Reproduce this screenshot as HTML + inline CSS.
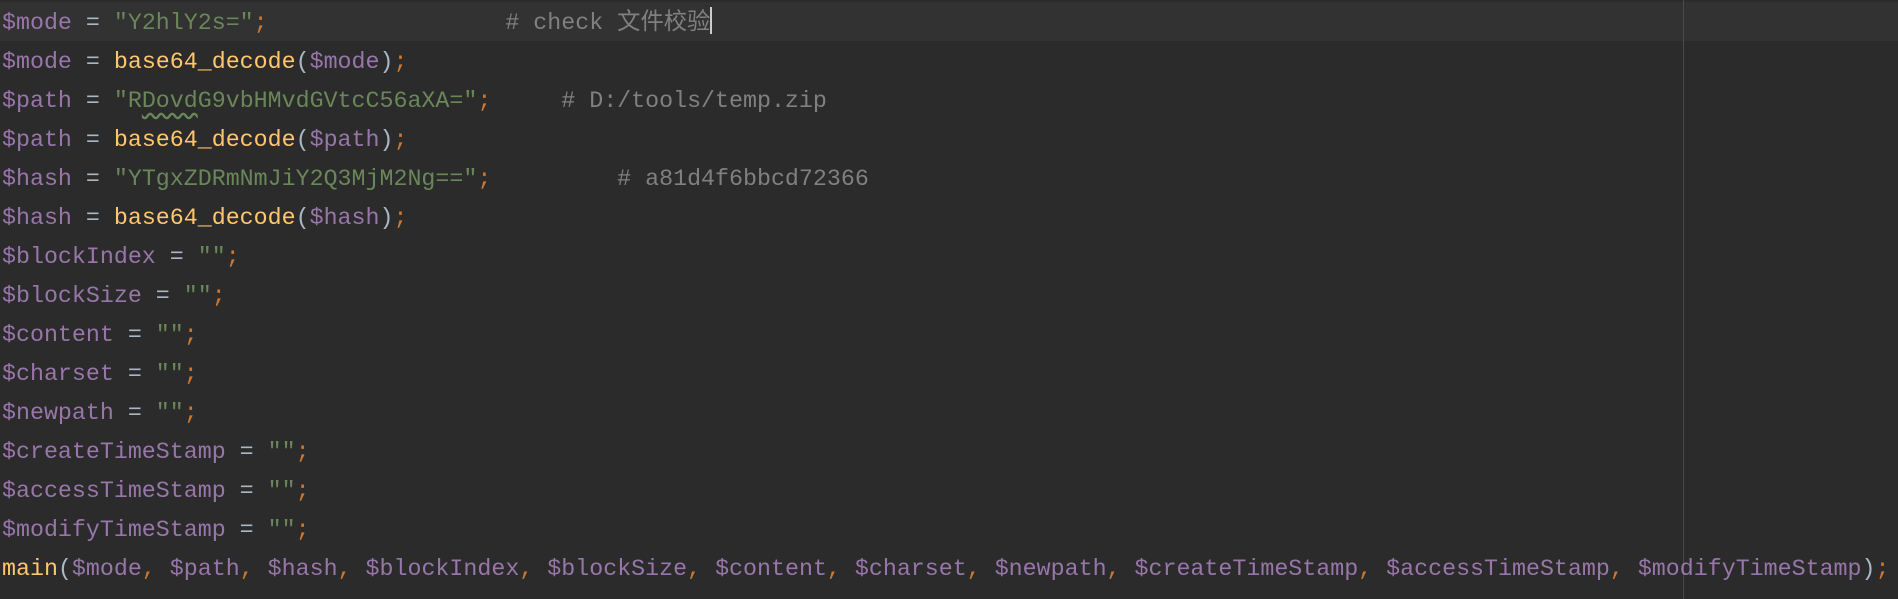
<!DOCTYPE html>
<html><head><meta charset="utf-8"><style>
html,body{margin:0;padding:0;background:#2b2b2b;width:1898px;height:599px;overflow:hidden}
.c{position:absolute;left:2px;top:4px;font-family:"Liberation Mono","Noto Sans CJK SC",monospace;font-size:23.3px;line-height:39px;color:#a9b7c6;white-space:pre}
.v{color:#9876aa}.s{color:#6a8759}.f{color:#ffc66d}.k{color:#cc7832}.m{color:#808080}
.hl{position:absolute;left:0;top:2px;width:1898px;height:39px;background:#323232}
.g{position:absolute;left:1683px;top:0;width:1px;height:599px;background:#4a4a4a}
.cur{display:inline-block;width:2px;height:27px;background:#ccc;vertical-align:-5px}
.w{text-decoration:underline wavy #6a8759;text-underline-offset:5px}
</style></head><body>
<div class="hl"></div><div class="g"></div>
<div class="c"><span class="v">$mode</span> = <span class="s">"Y2hlY2s="</span><span class="k">;</span>                 <span class="m"># check 文件校验</span><span class="cur"></span>
<span class="v">$mode</span> = <span class="f">base64_decode</span>(<span class="v">$mode</span>)<span class="k">;</span>
<span class="v">$path</span> = <span class="s">"R<span class="w">Dovd</span>G9vbHMvdGVtcC56aXA="</span><span class="k">;</span>     <span class="m"># D:/tools/temp.zip</span>
<span class="v">$path</span> = <span class="f">base64_decode</span>(<span class="v">$path</span>)<span class="k">;</span>
<span class="v">$hash</span> = <span class="s">"YTgxZDRmNmJiY2Q3MjM2Ng=="</span><span class="k">;</span>         <span class="m"># a81d4f6bbcd72366</span>
<span class="v">$hash</span> = <span class="f">base64_decode</span>(<span class="v">$hash</span>)<span class="k">;</span>
<span class="v">$blockIndex</span> = <span class="s">""</span><span class="k">;</span>
<span class="v">$blockSize</span> = <span class="s">""</span><span class="k">;</span>
<span class="v">$content</span> = <span class="s">""</span><span class="k">;</span>
<span class="v">$charset</span> = <span class="s">""</span><span class="k">;</span>
<span class="v">$newpath</span> = <span class="s">""</span><span class="k">;</span>
<span class="v">$createTimeStamp</span> = <span class="s">""</span><span class="k">;</span>
<span class="v">$accessTimeStamp</span> = <span class="s">""</span><span class="k">;</span>
<span class="v">$modifyTimeStamp</span> = <span class="s">""</span><span class="k">;</span>
<span class="f">main</span>(<span class="v">$mode</span><span class="k">,</span> <span class="v">$path</span><span class="k">,</span> <span class="v">$hash</span><span class="k">,</span> <span class="v">$blockIndex</span><span class="k">,</span> <span class="v">$blockSize</span><span class="k">,</span> <span class="v">$content</span><span class="k">,</span> <span class="v">$charset</span><span class="k">,</span> <span class="v">$newpath</span><span class="k">,</span> <span class="v">$createTimeStamp</span><span class="k">,</span> <span class="v">$accessTimeStamp</span><span class="k">,</span> <span class="v">$modifyTimeStamp</span>)<span class="k">;</span></div>
</body></html>
